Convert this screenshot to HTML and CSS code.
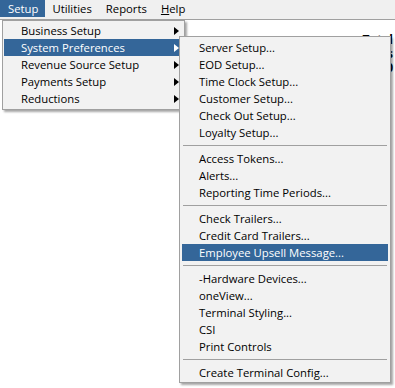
FILE: index.html
```html
<!DOCTYPE html>
<html>
<head>
  <title>Setup menu</title>
  <link rel="stylesheet" href="styles.css">
</head>
<body>

<div id="menubar">
  <span class="top open">Setup</span>
  <span class="top">Utilities</span>
  <span class="top">Reports</span>
  <span class="top"><u>H</u>elp</span>
</div>

<div id="page">
  <div class="store">
    <div>Total</div>
    <div>Sales</div>
    <div>$ 0.00</div>
  </div>
</div>

<div class="menu" id="setupMenu">
  <div class="item more">Business Setup</div>
  <div class="item more selected">System Preferences</div>
  <div class="item more">Revenue Source Setup</div>
  <div class="item more">Payments Setup</div>
  <div class="item more">Reductions</div>
</div>

<div class="menu" id="prefsMenu">
  <div class="item">Server Setup...</div>
  <div class="item">EOD Setup...</div>
  <div class="item">Time Clock Setup...</div>
  <div class="item">Customer Setup...</div>
  <div class="item">Check Out Setup...</div>
  <div class="item">Loyalty Setup...</div>
  <div class="sep"></div>
  <div class="item">Access Tokens...</div>
  <div class="item">Alerts...</div>
  <div class="item">Reporting Time Periods...</div>
  <div class="sep"></div>
  <div class="item">Check Trailers...</div>
  <div class="item">Credit Card Trailers...</div>
  <div class="item selected">Employee Upsell Message...</div>
  <div class="sep"></div>
  <div class="item">-Hardware Devices...</div>
  <div class="item">oneView...</div>
  <div class="item">Terminal Styling...</div>
  <div class="item">CSI</div>
  <div class="item">Print Controls</div>
  <div class="sep"></div>
  <div class="item">Create Terminal Config...</div>
</div>

</body>
</html>
```

FILE: styles.css
```css
body{
  margin: 0;
  background: white;
  font-family: "Open Sans", "Noto Sans", sans-serif;
  font-size: 11.3px;
  color: black;
  height: 388px;
  overflow: hidden;
  position: relative;
}

#menubar{
  display: flex;
  height: 19px;
  background: #f0f0f0;
  border-bottom: 1px solid #a0a0a0;
}

.top{
  padding: 0 7px;
  height: 17px;
  line-height: 18px;
}

.top:first-child{
  padding-left: 8px;
}

.top.open{
  background: #346699;
  color: white;
}

#page{
  display: flex;
  justify-content: flex-end;
  padding: 13px 2px 0 0;
}

.store{
  font-weight: bold;
  font-size: 12px;
  line-height: 14px;
  text-align: right;
}

.menu{
  position: absolute;
  background: #f2f2f2;
  border: 1px solid #a0a0a0;
  box-shadow: 2px 2px 2px rgba(0, 0, 0, 0.35);
}

#setupMenu{
  left: 2px;
  top: 20px;
  padding: 1px 1px 2px 1px;
  box-sizing: border-box;
  height: 90px;
  width: 183px;
}

#prefsMenu{
  left: 179px;
  top: 36px;
  width: 212px;
  box-sizing: border-box;
  padding: 2px 2px 1px 2px;
}

.item{
  height: 17px;
  line-height: 18px;
  padding-left: 17px;
  position: relative;
  white-space: nowrap;
}

.item.selected{
  background: #346699;
  color: white;
}

.more::after{
  content: "";
  position: absolute;
  right: 4px;
  top: 5px;
  border-left: 5px solid black;
  border-top: 4px solid transparent;
  border-bottom: 4px solid transparent;
}

.more.selected::after{
  border-left-color: white;
}

.sep{
  height: 9px;
  position: relative;
}

.sep::before{
  content: "";
  position: absolute;
  left: 1px;
  right: 1px;
  top: 4px;
  border-top: 1px solid #a0a0a0;
}
```
